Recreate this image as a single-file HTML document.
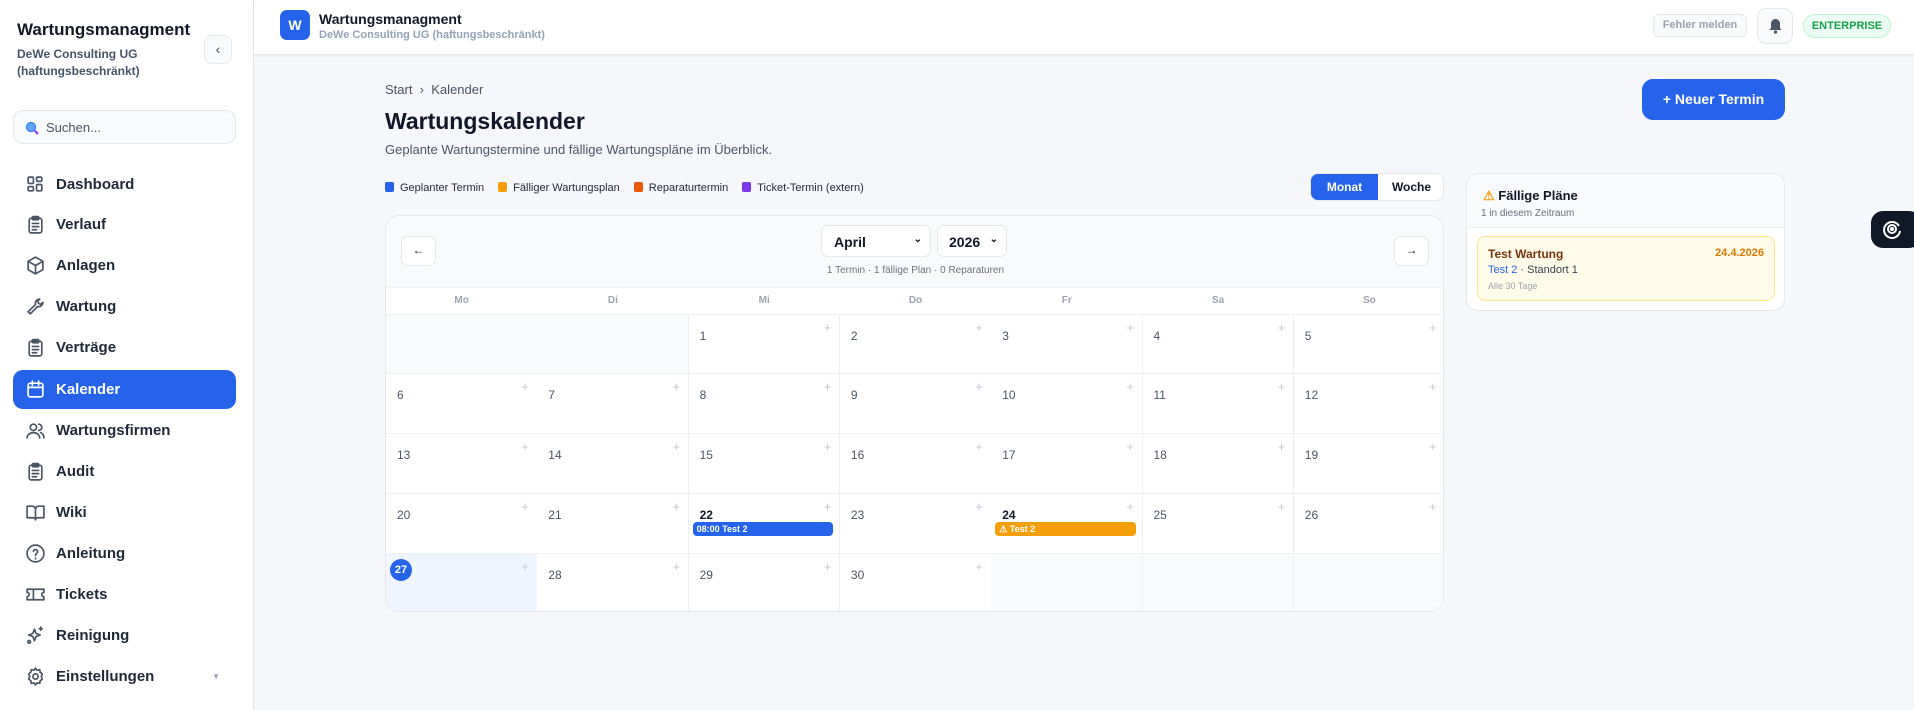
<!DOCTYPE html>
<html><head><meta charset="utf-8"><style>
*{box-sizing:border-box;margin:0;padding:0}
body{width:1914px;height:710px;overflow:hidden;background:#f5f7fa;font-family:"Liberation Sans",sans-serif;color:#111827;position:relative}
.abs{position:absolute}
.side{left:0;top:0;width:254px;height:710px;background:#fff;border-right:1px solid #e5e7eb}
.nav{position:absolute;left:13px;width:223px;height:39px;border-radius:10px;display:flex;align-items:center;padding-left:12px;font-size:15px;font-weight:700;color:#1f2937}
.nav svg{width:21px;height:21px;margin-right:10px;fill:none;stroke:#4b5563;stroke-width:1.6;stroke-linecap:round;stroke-linejoin:round}
.nav.act{background:#2563eb;color:#fff}
.nav.act svg{stroke:#fff}
.top{left:254px;top:0;width:1660px;height:55px;background:#fff;border-bottom:1px solid #e5e7eb;box-shadow:0 1px 3px rgba(0,0,0,.05)}
.cal{left:385px;top:215px;width:1059px;height:397px;background:#fff;border:1px solid #e5e7eb;border-radius:14px;overflow:hidden}
.cell{position:absolute;border-right:1px solid #eef0f3;border-bottom:1px solid #eef0f3;background:#fff}
.cell .n{position:absolute;left:11px;top:14px;font-size:12px;color:#4b5563}
.cell .p{position:absolute;right:8px;top:5px;font-size:13px;color:#c4cad4}
.cell.e{background:#f8fafc}
.ev{position:absolute;left:4px;right:6px;top:28px;height:14px;border-radius:4px;color:#fff;font-size:9px;font-weight:700;padding-left:4px;line-height:14px}
</style></head><body>
<div class="abs side">
  <div class="abs" style="left:17px;top:20px;font-size:17px;font-weight:700">Wartungsmanagment</div>
  <div class="abs" style="left:17px;top:46px;font-size:12px;font-weight:700;color:#475569;line-height:17px">DeWe Consulting UG<br>(haftungsbeschränkt)</div>
  <div class="abs" style="left:204px;top:35px;width:28px;height:29px;border:1px solid #e5e7eb;border-radius:8px;background:#f9fafb;text-align:center;line-height:27px;color:#4b5563;font-size:14px">‹</div>
  <div class="abs" style="left:13px;top:110px;width:223px;height:34px;border:1px solid #e5e7eb;border-radius:10px;background:#f9fafb;font-size:13px;color:#4b5563;padding:9px 0 0 32px">Suchen...
    <svg class="abs" style="left:11px;top:10px" width="14" height="14" viewBox="0 0 14 14"><circle cx="6" cy="6" r="4.5" fill="#60a5fa" stroke="#3b82f6" stroke-width="1.3"/><line x1="9.5" y1="9.5" x2="13" y2="13" stroke="#7c3aed" stroke-width="2"/></svg></div>
  <div class="nav" style="top:165px"><svg viewBox="0 0 20 20"><rect x="3" y="3" width="5" height="6" rx="1"/><rect x="11" y="3" width="5" height="4" rx="1"/><rect x="3" y="12" width="5" height="4" rx="1"/><rect x="11" y="10" width="5" height="6" rx="1"/></svg>Dashboard</div>
  <div class="nav" style="top:205px"><svg viewBox="0 0 20 20"><rect x="4" y="4" width="12" height="14" rx="2"/><rect x="7" y="2.5" width="6" height="3" rx="1"/><path d="M7 9h6M7 12h6M7 15h4"/></svg>Verlauf</div>
  <div class="nav" style="top:246px"><svg viewBox="0 0 20 20"><path d="M10 2l7 4v8l-7 4-7-4V6z M3 6l7 4 7-4 M10 10v8"/></svg>Anlagen</div>
  <div class="nav" style="top:287px"><svg viewBox="0 0 20 20"><path d="M14 3a4 4 0 0 0-4 5L3 15l2 2 7-7a4 4 0 0 0 5-4l-2 2-2-1-1-2z"/></svg>Wartung</div>
  <div class="nav" style="top:328px"><svg viewBox="0 0 20 20"><rect x="4" y="4" width="12" height="14" rx="2"/><rect x="7" y="2.5" width="6" height="3" rx="1"/><path d="M7 9h6M7 12h6M7 15h4"/></svg>Verträge</div>
  <div class="nav act" style="top:370px"><svg viewBox="0 0 20 20"><rect x="3" y="4" width="14" height="13" rx="2"/><path d="M3 8h14M7 2v4M13 2v4"/></svg>Kalender</div>
  <div class="nav" style="top:411px"><svg viewBox="0 0 20 20"><circle cx="8" cy="7" r="3"/><path d="M2 17c0-3 3-5 6-5s6 2 6 5M13 4a3 3 0 0 1 0 6M15 12c2 1 3 3 3 5"/></svg>Wartungsfirmen</div>
  <div class="nav" style="top:452px"><svg viewBox="0 0 20 20"><rect x="4" y="4" width="12" height="14" rx="2"/><rect x="7" y="2.5" width="6" height="3" rx="1"/><path d="M7 9h6M7 12h6M7 15h4"/></svg>Audit</div>
  <div class="nav" style="top:493px"><svg viewBox="0 0 20 20"><path d="M2 4h5a3 3 0 0 1 3 3v10a2 2 0 0 0-2-2H2zM18 4h-5a3 3 0 0 0-3 3v10a2 2 0 0 1 2-2h6z"/></svg>Wiki</div>
  <div class="nav" style="top:534px"><svg viewBox="0 0 20 20"><circle cx="10" cy="10" r="8"/><path d="M8 8a2 2 0 1 1 3 2c-1 .5-1 1-1 2M10 14.5v.5"/></svg>Anleitung</div>
  <div class="nav" style="top:575px"><svg viewBox="0 0 20 20"><path d="M2 5h16v3a2 2 0 0 0 0 4v3H2v-3a2 2 0 0 0 0-4z M8 5v10"/></svg>Tickets</div>
  <div class="nav" style="top:616px"><svg viewBox="0 0 20 20"><path d="M9 4l1.5 4 4 1.5-4 1.5L9 15l-1.5-4-4-1.5 4-1.5z M15 2v3M13.5 3.5h3"/><circle cx="4" cy="16" r="1.3"/></svg>Reinigung</div>
  <div class="nav" style="top:657px"><svg viewBox="0 0 20 20"><circle cx="10" cy="10" r="2.5"/><path d="M10 2l1.5 2 2.5-.5.5 2.5 2 1.5-1 2.5 1 2.5-2 1.5-.5 2.5-2.5-.5L10 18l-1.5-2-2.5.5-.5-2.5-2-1.5 1-2.5-1-2.5 2-1.5.5-2.5 2.5.5z"/></svg>Einstellungen<span style="position:absolute;right:16px;font-size:8px;color:#9ca3af">▼</span></div>
</div>

<div class="abs top">
  <div class="abs" style="left:26px;top:10px;width:30px;height:30px;border-radius:7px;background:#2563eb;color:#fff;font-weight:700;font-size:14px;text-align:center;line-height:30px">W</div>
  <div class="abs" style="left:65px;top:11px;font-size:14px;font-weight:700">Wartungsmanagment</div>
  <div class="abs" style="left:65px;top:29px;font-size:11px;font-weight:700;color:#94a3b8">DeWe Consulting UG (haftungsbeschränkt)</div>
  <div class="abs" style="left:1399px;top:14px;width:94px;height:23px;border:1px solid #e5e7eb;border-radius:6px;background:#f9fafb;font-size:11px;font-weight:700;color:#9ca3af;text-align:center;line-height:21px">Fehler melden</div>
  <div class="abs" style="left:1503px;top:8px;width:36px;height:36px;border:1px solid #e5e7eb;border-radius:9px;background:#f9fafb"><svg class="abs" style="left:10px;top:9px" width="15" height="16" viewBox="0 0 15 16"><path d="M7.5 1a4.5 4.5 0 0 0-4.5 4.5V10L1.5 12h12L12 10V5.5A4.5 4.5 0 0 0 7.5 1z" fill="#4b5563"/><circle cx="7.5" cy="14" r="1.6" fill="#4b5563"/></svg></div>
  <div class="abs" style="left:1549px;top:14px;width:88px;height:24px;border:1px solid #bbf7d0;border-radius:12px;background:#ecfdf5;font-size:11px;font-weight:700;color:#16a34a;text-align:center;line-height:22px">ENTERPRISE</div>
</div>

<div class="abs" style="left:385px;top:82px;font-size:13px;color:#4b5563">Start &nbsp;›&nbsp; Kalender</div>
<div class="abs" style="left:385px;top:108px;font-size:23px;font-weight:700">Wartungskalender</div>
<div class="abs" style="left:385px;top:142px;font-size:13px;color:#4b5563">Geplante Wartungstermine und fällige Wartungspläne im Überblick.</div>
<div class="abs" style="left:1642px;top:79px;width:143px;height:41px;border-radius:11px;background:#2563eb;color:#fff;font-size:14px;font-weight:700;text-align:center;line-height:41px">+ Neuer Termin</div>

<div class="abs" style="left:385px;top:182px;font-size:11px;color:#1f2937;display:flex;gap:14px;align-items:center">
 <span><i style="display:inline-block;width:9px;height:10px;border-radius:2px;background:#2563eb;margin-right:6px;vertical-align:-1px"></i>Geplanter Termin</span>
 <span><i style="display:inline-block;width:9px;height:10px;border-radius:2px;background:#f59e0b;margin-right:6px;vertical-align:-1px"></i>Fälliger Wartungsplan</span>
 <span><i style="display:inline-block;width:9px;height:10px;border-radius:2px;background:#ea580c;margin-right:6px;vertical-align:-1px"></i>Reparaturtermin</span>
 <span><i style="display:inline-block;width:9px;height:10px;border-radius:2px;background:#7c3aed;margin-right:6px;vertical-align:-1px"></i>Ticket-Termin (extern)</span>
</div>
<div class="abs" style="left:1310px;top:173px;width:134px;height:28px;border:1px solid #e5e7eb;border-radius:8px;background:#fff;overflow:hidden;font-size:12px;font-weight:700">
 <div class="abs" style="left:0;top:0;width:67px;height:28px;background:#2563eb;color:#fff;text-align:center;line-height:27px">Monat</div>
 <div class="abs" style="left:67px;top:0;width:67px;text-align:center;line-height:27px">Woche</div>
</div>

<div class="abs cal">
 <div class="abs" style="left:0;top:0;width:1059px;height:72px;background:#f9fafb;border-bottom:1px solid #eef0f3"></div>
 <div class="abs" style="left:15px;top:20px;width:35px;height:30px;border:1px solid #e5e7eb;border-radius:7px;background:#fff;text-align:center;line-height:27px;font-size:12px">←</div>
 <div class="abs" style="left:1008px;top:20px;width:35px;height:30px;border:1px solid #e5e7eb;border-radius:7px;background:#fff;text-align:center;line-height:27px;font-size:12px">→</div>
 <div class="abs" style="left:435px;top:9px;width:110px;height:32px;border:1px solid #e5e7eb;border-radius:7px;background:#fff;font-size:14px;font-weight:700;padding:8px 0 0 12px">April<span style="position:absolute;right:8px;top:8px;font-size:10px">⌄</span></div>
 <div class="abs" style="left:551px;top:9px;width:70px;height:32px;border:1px solid #e5e7eb;border-radius:7px;background:#fff;font-size:14px;font-weight:700;padding:8px 0 0 11px">2026<span style="position:absolute;right:8px;top:8px;font-size:10px">⌄</span></div>
 <div class="abs" style="left:0;width:1059px;top:49px;text-align:center;font-size:10px;color:#6b7280">1 Termin · 1 fällige Plan · 0 Reparaturen</div>
 <div class="abs" style="left:0;top:72px;width:1059px;height:27px;border-bottom:1px solid #eef0f3;display:flex;font-size:10px;font-weight:700;color:#9ca3af">
  <div style="flex:1;text-align:center;line-height:26px">Mo</div><div style="flex:1;text-align:center;line-height:26px">Di</div><div style="flex:1;text-align:center;line-height:26px">Mi</div><div style="flex:1;text-align:center;line-height:26px">Do</div><div style="flex:1;text-align:center;line-height:26px">Fr</div><div style="flex:1;text-align:center;line-height:26px">Sa</div><div style="flex:1;text-align:center;line-height:26px">So</div>
 </div>
 <div id="g"></div>
</div>

<div class="abs" style="left:1466px;top:173px;width:319px;height:138px;background:#fff;border:1px solid #e5e7eb;border-radius:12px;overflow:hidden">
 <div class="abs" style="left:0;top:0;width:319px;height:54px;background:#f9fafb;border-bottom:1px solid #eef0f3"></div>
 <div class="abs" style="left:16px;top:14px;font-size:13px;font-weight:700"><span style="color:#f59e0b">⚠</span> Fällige Pläne</div>
 <div class="abs" style="left:14px;top:34px;font-size:10px;color:#6b7280">1 in diesem Zeitraum</div>
 <div class="abs" style="left:10px;top:62px;width:298px;height:65px;background:#fefce8;border:1px solid #fde68a;border-radius:8px">
  <div class="abs" style="left:10px;top:10px;font-size:12px;font-weight:700;color:#78350f">Test Wartung</div>
  <div class="abs" style="right:10px;top:10px;font-size:11px;font-weight:700;color:#d97706">24.4.2026</div>
  <div class="abs" style="left:10px;top:27px;font-size:11px;color:#374151"><span style="color:#2563eb">Test 2</span> · Standort 1</div>
  <div class="abs" style="left:10px;top:44px;font-size:9px;color:#9ca3af">Alle 30 Tage</div>
 </div>
</div>
<div class="abs" style="left:1871px;top:211px;width:50px;height:37px;border-radius:12px;background:#111827"><svg class="abs" style="left:10px;top:7px" width="22" height="22" viewBox="0 0 22 22" fill="none" stroke="#fff" stroke-width="2"><path d="M18 8A8 8 0 1 0 19 13"/><circle cx="11" cy="11" r="4"/><circle cx="11" cy="11" r="1" fill="#fff"/></svg></div>

<script>
var g=document.getElementById('g'),h='',cw=151.3,rows=[99,158,218,278,338,397];
for(var r=0;r<5;r++)for(var c=0;c<7;c++){var d=r*7+c-1,L=(c*cw).toFixed(1),T=rows[r],H=rows[r+1]-rows[r];
var cls='cell',inner='';
if(d<1||d>30)cls+=' e';else{
 var dark=(d==22||d==24)?'color:#111827;font-weight:700':'';
 if(d==27)inner='<div style="position:absolute;left:4px;top:5px;width:22px;height:22px;border-radius:50%;background:#2563eb;color:#fff;font-size:11px;font-weight:700;text-align:center;line-height:22px">27</div>';
 else inner='<div class="n" style="'+dark+'">'+d+'</div>';
 inner+='<div class="p">+</div>';
 if(d==22)inner+='<div class="ev" style="background:#2563eb">08:00 Test 2</div>';
 if(d==24)inner+='<div class="ev" style="background:#f59e0b">⚠ Test 2</div>';
}
h+='<div class="'+cls+'" style="left:'+L+'px;top:'+T+'px;width:'+(cw+0.5).toFixed(1)+'px;height:'+H+'px;'+(d==27?'background:#eff6ff':'')+'">'+inner+'</div>';}
g.innerHTML=h;
</script>
</body></html>
